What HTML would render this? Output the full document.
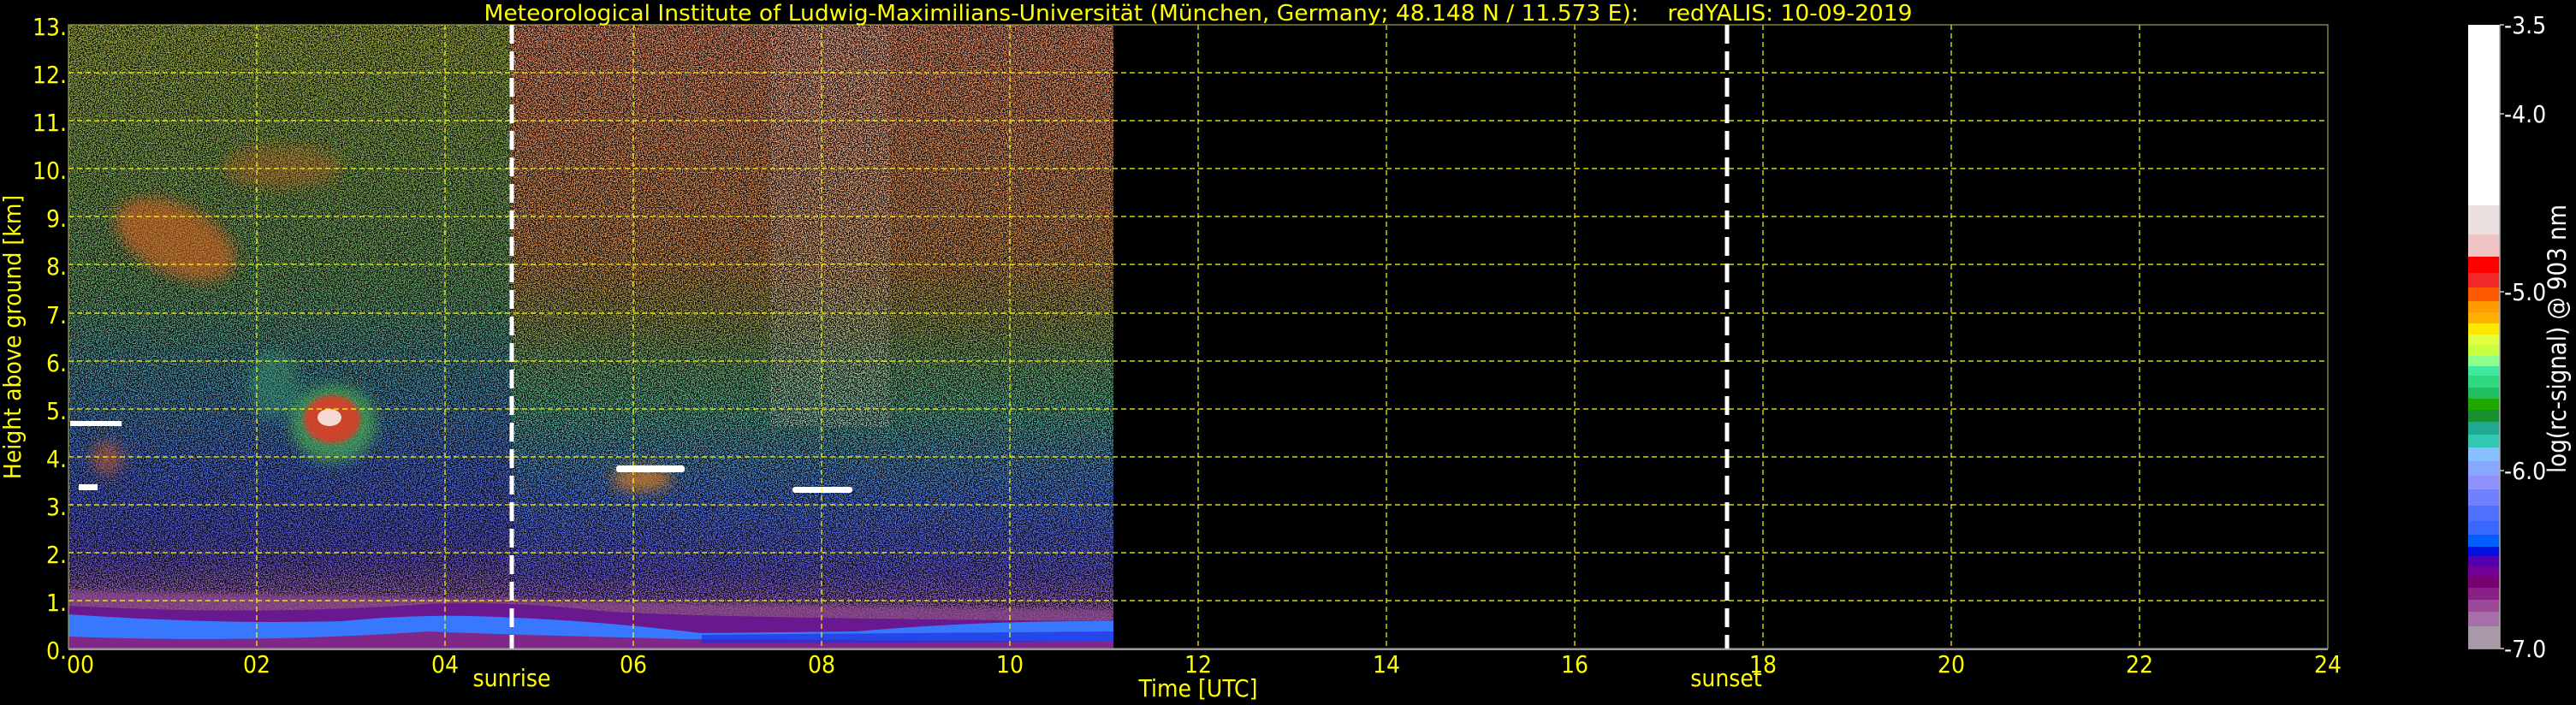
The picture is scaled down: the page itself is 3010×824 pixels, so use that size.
<!DOCTYPE html>
<html><head><meta charset="utf-8">
<style>
html,body{margin:0;padding:0;background:#000;}
svg{display:block;}
text{font-family:"DejaVu Sans Condensed","DejaVu Sans","Liberation Sans",sans-serif;}
</style></head>
<body>
<svg width="3010" height="824" viewBox="0 0 3010 824" xmlns="http://www.w3.org/2000/svg">
<defs>
  <linearGradient id="gl" x1="0" y1="29" x2="0" y2="758" gradientUnits="userSpaceOnUse">
    <stop offset="0" stop-color="#80a050"/>
    <stop offset="0.45" stop-color="#60a070"/>
    <stop offset="0.58" stop-color="#5090a0"/>
    <stop offset="0.72" stop-color="#5068d0"/>
    <stop offset="0.86" stop-color="#6050c8"/>
    <stop offset="0.93" stop-color="#a070b0"/>
    <stop offset="1" stop-color="#a070b0"/>
  </linearGradient>
  <linearGradient id="gr" x1="0" y1="29" x2="0" y2="758" gradientUnits="userSpaceOnUse">
    <stop offset="0" stop-color="#d8a080"/>
    <stop offset="0.35" stop-color="#c89a60"/>
    <stop offset="0.47" stop-color="#98a050"/>
    <stop offset="0.62" stop-color="#60b090"/>
    <stop offset="0.76" stop-color="#5078e0"/>
    <stop offset="0.88" stop-color="#5858e0"/>
    <stop offset="0.93" stop-color="#9868c0"/>
    <stop offset="1" stop-color="#9868c0"/>
  </linearGradient>
  <linearGradient id="tl" x1="0" y1="29" x2="0" y2="758" gradientUnits="userSpaceOnUse">
    <stop offset="0" stop-color="#e0c020" stop-opacity="0.6"/>
    <stop offset="0.4" stop-color="#a0c040" stop-opacity="0.35"/>
    <stop offset="0.55" stop-color="#40a0ff" stop-opacity="0.3"/>
    <stop offset="0.8" stop-color="#4060ff" stop-opacity="0.4"/>
    <stop offset="0.9" stop-color="#b060c0" stop-opacity="0.4"/>
    <stop offset="1" stop-color="#b060c0" stop-opacity="0"/>
  </linearGradient>
  <linearGradient id="tr" x1="0" y1="29" x2="0" y2="758" gradientUnits="userSpaceOnUse">
    <stop offset="0" stop-color="#ff5020" stop-opacity="0.5"/>
    <stop offset="0.4" stop-color="#ff6020" stop-opacity="0.35"/>
    <stop offset="0.55" stop-color="#40d080" stop-opacity="0.3"/>
    <stop offset="0.75" stop-color="#4080ff" stop-opacity="0.35"/>
    <stop offset="0.9" stop-color="#b060c0" stop-opacity="0.4"/>
    <stop offset="1" stop-color="#b060c0" stop-opacity="0"/>
  </linearGradient>
  <linearGradient id="cb" x1="0" y1="29" x2="0" y2="758" gradientUnits="userSpaceOnUse">
    <stop offset="0" stop-color="#fff"/><stop offset="0.2894" stop-color="#fff"/>
    <stop offset="0.2894" stop-color="#ebe0e0"/><stop offset="0.336" stop-color="#ebe0e0"/>
    <stop offset="0.336" stop-color="#f0c4c4"/><stop offset="0.3717" stop-color="#f0c4c4"/>
    <stop offset="0.3717" stop-color="#ff0000"/><stop offset="0.3978" stop-color="#ff0000"/>
    <stop offset="0.3978" stop-color="#f02828"/><stop offset="0.4211" stop-color="#f02828"/>
    <stop offset="0.4211" stop-color="#ff5a00"/><stop offset="0.4431" stop-color="#ff5a00"/>
    <stop offset="0.4431" stop-color="#ff9a00"/><stop offset="0.4609" stop-color="#ff9a00"/>
    <stop offset="0.4609" stop-color="#ffb000"/><stop offset="0.4787" stop-color="#ffb000"/>
    <stop offset="0.4787" stop-color="#ffe800"/><stop offset="0.4966" stop-color="#ffe800"/>
    <stop offset="0.4966" stop-color="#e0ff40"/><stop offset="0.5130" stop-color="#e0ff40"/>
    <stop offset="0.5130" stop-color="#c8ff40"/><stop offset="0.5309" stop-color="#c8ff40"/>
    <stop offset="0.5309" stop-color="#8cff8c"/><stop offset="0.5473" stop-color="#8cff8c"/>
    <stop offset="0.5473" stop-color="#40e8a0"/><stop offset="0.5624" stop-color="#40e8a0"/>
    <stop offset="0.5624" stop-color="#30d880"/><stop offset="0.5816" stop-color="#30d880"/>
    <stop offset="0.5816" stop-color="#20c060"/><stop offset="0.5994" stop-color="#20c060"/>
    <stop offset="0.5994" stop-color="#20a800"/><stop offset="0.6173" stop-color="#20a800"/>
    <stop offset="0.6173" stop-color="#189030"/><stop offset="0.6365" stop-color="#189030"/>
    <stop offset="0.6365" stop-color="#20a890"/><stop offset="0.6571" stop-color="#20a890"/>
    <stop offset="0.6571" stop-color="#30c8b0"/><stop offset="0.6776" stop-color="#30c8b0"/>
    <stop offset="0.6776" stop-color="#88c0ff"/><stop offset="0.6996" stop-color="#88c0ff"/>
    <stop offset="0.6996" stop-color="#88a8ff"/><stop offset="0.7229" stop-color="#88a8ff"/>
    <stop offset="0.7229" stop-color="#9090ff"/><stop offset="0.7449" stop-color="#9090ff"/>
    <stop offset="0.7449" stop-color="#7080ff"/><stop offset="0.7709" stop-color="#7080ff"/>
    <stop offset="0.7709" stop-color="#5070ff"/><stop offset="0.7956" stop-color="#5070ff"/>
    <stop offset="0.7956" stop-color="#3868ff"/><stop offset="0.8176" stop-color="#3868ff"/>
    <stop offset="0.8176" stop-color="#0060ff"/><stop offset="0.8368" stop-color="#0060ff"/>
    <stop offset="0.8368" stop-color="#0010e0"/><stop offset="0.8519" stop-color="#0010e0"/>
    <stop offset="0.8519" stop-color="#5000b0"/><stop offset="0.8684" stop-color="#5000b0"/>
    <stop offset="0.8684" stop-color="#700098"/><stop offset="0.8848" stop-color="#700098"/>
    <stop offset="0.8848" stop-color="#780070"/><stop offset="0.9026" stop-color="#780070"/>
    <stop offset="0.9026" stop-color="#882088"/><stop offset="0.9218" stop-color="#882088"/>
    <stop offset="0.9218" stop-color="#9a4898"/><stop offset="0.9410" stop-color="#9a4898"/>
    <stop offset="0.9410" stop-color="#a870a8"/><stop offset="0.9643" stop-color="#a870a8"/>
    <stop offset="0.9643" stop-color="#a898a8"/><stop offset="1" stop-color="#a898a8"/>
  </linearGradient>
  <filter id="n" x="80" y="29" width="1221" height="729" filterUnits="userSpaceOnUse">
    <feTurbulence type="fractalNoise" baseFrequency="0.8" numOctaves="1" seed="4" result="t"/>
    <feColorMatrix in="t" type="matrix" values="0 0 0 0 0  0 0 0 0 0  0 0 0 0 0  9 0 0 0 -4.1" result="m"/>
    <feComposite in="SourceGraphic" in2="m" operator="in"/>
  </filter>
  <filter id="n2" x="80" y="29" width="1221" height="729" filterUnits="userSpaceOnUse">
    <feTurbulence type="fractalNoise" baseFrequency="0.7" numOctaves="1" seed="11" result="t"/>
    <feColorMatrix in="t" type="matrix" values="0 0 0 0 0  0 0 0 0 0  0 0 0 0 0  0 9 0 0 -4.6" result="m"/>
    <feComposite in="SourceGraphic" in2="m" operator="in"/>
  </filter>
  <filter id="b4"><feGaussianBlur stdDeviation="3"/></filter>
  <filter id="b10"><feGaussianBlur stdDeviation="8"/></filter>
  <clipPath id="dc"><rect x="80" y="29" width="1221" height="729"/></clipPath>
</defs>

<!-- data -->
<g clip-path="url(#dc)">
  <g filter="url(#n)">
    <rect x="80" y="29" width="518" height="729" fill="url(#gl)"/>
    <rect x="598" y="29" width="703" height="729" fill="url(#gr)"/>
    <rect x="900" y="29" width="140" height="470" fill="#f0e0d8" opacity="0.4"/>
  </g>
  <g filter="url(#n2)">
    <rect x="80" y="29" width="518" height="729" fill="url(#tl)"/>
    <rect x="598" y="29" width="703" height="729" fill="url(#tr)"/>
  </g>
  <!-- bottom bands -->
  <path d="M80 690 L597 700 L800 705 L1301 712 L1301 735 L80 735 Z" fill="#904a90" opacity="0.75" filter="url(#b4)"/>
  <path d="M80 708 Q300 720 500 706 Q600 702 700 714 Q800 722 1301 726 L1301 742 L80 742 Z" fill="#6a1890"/>
  <path d="M80 718 Q250 730 400 726 Q500 716 600 722 Q700 726 820 740 L1000 738 Q1150 725 1301 726 L1301 750 L80 750 Z" fill="#3878ff"/>
  <path d="M80 744 Q300 752 500 738 Q600 742 800 747 L1301 750 L1301 758 L80 758 Z" fill="#802888"/>
  <path d="M820 742 L1301 738 L1301 750 L820 752 Z" fill="#2030e0" opacity="0.7"/>
  <!-- clouds -->
  <g filter="url(#b10)">
    <ellipse cx="205" cy="280" rx="75" ry="40" fill="#e86020" opacity="0.55" transform="rotate(25 205 280)"/>
    <ellipse cx="330" cy="195" rx="70" ry="25" fill="#c86020" opacity="0.35"/>
    <ellipse cx="390" cy="495" rx="50" ry="45" fill="#50c050" opacity="0.6"/>
    <ellipse cx="320" cy="450" rx="30" ry="40" fill="#40b070" opacity="0.35"/>
    <ellipse cx="125" cy="535" rx="18" ry="20" fill="#e06020" opacity="0.5"/>
    <ellipse cx="750" cy="560" rx="35" ry="14" fill="#e08020" opacity="0.7"/>
  </g>
  <ellipse cx="388" cy="490" rx="33" ry="28" fill="#f03020" opacity="0.8" filter="url(#b4)"/>
  <ellipse cx="385" cy="488" rx="14" ry="10" fill="#fff" opacity="0.8"/>
  <rect x="82" y="492" width="60" height="6" fill="#fff"/>
  <rect x="92" y="566" width="22" height="7" fill="#fff"/>
  <rect x="720" y="544" width="80" height="8" rx="3" fill="#fff"/>
  <rect x="926" y="569" width="70" height="7" rx="3" fill="#fff"/>
</g>

<!-- grid -->
<g stroke="#ffff00" stroke-width="1.2" stroke-dasharray="6 4" fill="none">
  <path d="M80 702H2720M80 646H2720M80 590H2720M80 534H2720M80 478H2720M80 422H2720M80 366H2720M80 309H2720M80 253H2720M80 197H2720M80 141H2720M80 85H2720"/>
  <path d="M300 29V758M520 29V758M740 29V758M960 29V758M1180 29V758M1400 29V758M1620 29V758M1840 29V758M2060 29V758M2280 29V758M2500 29V758"/>
</g>
<rect x="80" y="29" width="2640" height="729" fill="none" stroke="#a0a050" stroke-width="1.2"/>
<line x1="80" y1="759" x2="2720" y2="759" stroke="#999" stroke-width="2"/>

<!-- sunrise / sunset -->
<line x1="598" y1="29" x2="598" y2="758" stroke="#fff" stroke-width="5" stroke-dasharray="22 9"/>
<line x1="2018" y1="29" x2="2018" y2="758" stroke="#fff" stroke-width="5" stroke-dasharray="22 9"/>

<!-- title -->
<text x="1400" y="24" fill="#ffff00" font-size="26" text-anchor="middle" textLength="1669" lengthAdjust="spacingAndGlyphs" style="white-space:pre">Meteorological Institute of Ludwig-Maximilians-Universität (München, Germany; 48.148 N / 11.573 E):    redYALIS: 10-09-2019</text>

<!-- y ticks -->
<g fill="#ffff00" font-size="28" text-anchor="end">
  <text x="78" y="41">13.</text><text x="78" y="97">12.</text><text x="78" y="153">11.</text>
  <text x="78" y="209">10.</text><text x="78" y="265">9.</text><text x="78" y="321">8.</text>
  <text x="78" y="378">7.</text><text x="78" y="434">6.</text><text x="78" y="490">5.</text>
  <text x="78" y="546">4.</text><text x="78" y="602">3.</text><text x="78" y="658">2.</text>
  <text x="78" y="714">1.</text><text x="78" y="770">0.</text>
</g>
<text transform="translate(24 394) rotate(-90)" fill="#ffff00" font-size="28" text-anchor="middle">Height above ground [km]</text>

<!-- x ticks -->
<g fill="#ffff00" font-size="28" text-anchor="middle">
  <text x="94" y="786">00</text><text x="300" y="786">02</text><text x="520" y="786">04</text>
  <text x="740" y="786">06</text><text x="960" y="786">08</text><text x="1180" y="786">10</text>
  <text x="1400" y="786">12</text><text x="1620" y="786">14</text><text x="1840" y="786">16</text>
  <text x="2060" y="786">18</text><text x="2280" y="786">20</text><text x="2500" y="786">22</text>
  <text x="2720" y="786">24</text>
  <text x="598" y="802">sunrise</text>
  <text x="2017" y="802">sunset</text>
  <text x="1400" y="814">Time [UTC]</text>
</g>

<!-- colorbar -->
<rect x="2884" y="29" width="37" height="729" fill="url(#cb)"/>
<line x1="2921" y1="29" x2="2921" y2="758" stroke="#aaa" stroke-width="1.5"/>
<line x1="2884" y1="758" x2="2921" y2="758" stroke="#aaa" stroke-width="1.5"/>
<g stroke="#ccc" stroke-width="1.5">
  <path d="M2921 29h5M2921 133h5M2921 341h5M2921 550h5M2921 758h5"/>
</g>
<g fill="#fff" font-size="28" style="font-family:'DejaVu Sans',sans-serif">
  <text x="2926" y="39">-3.5</text><text x="2926" y="143">-4.0</text>
  <text x="2926" y="351">-5.0</text><text x="2926" y="560">-6.0</text>
  <text x="2926" y="768">-7.0</text>
</g>
<text transform="translate(2998 396) rotate(-90)" fill="#fff" font-size="29" text-anchor="middle">log(rc-signal) @ 903 nm</text>
</svg>
</body></html>
